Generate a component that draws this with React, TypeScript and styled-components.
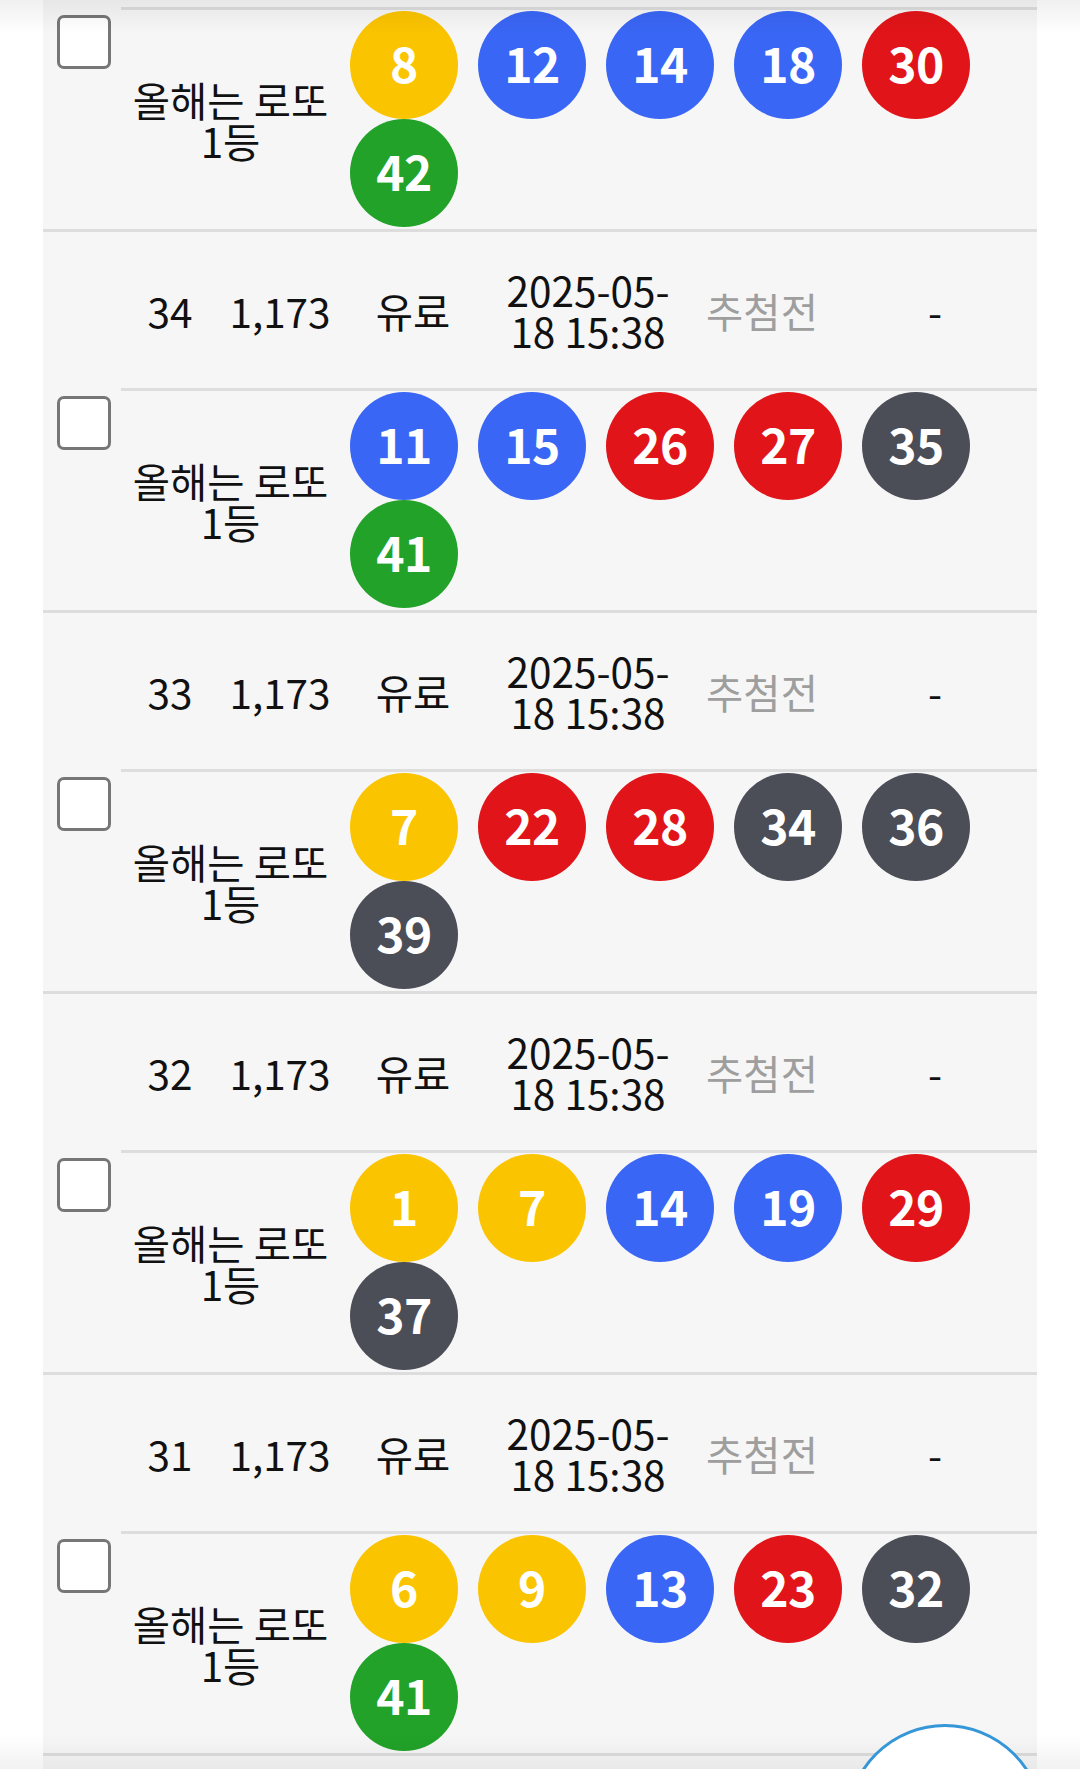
import React from "react";
import styled, { createGlobalStyle } from "styled-components";

const GlobalStyle = createGlobalStyle`
  html, body { margin: 0; padding: 0; background: #ffffff; }
  body {
    font-family: "Noto Sans CJK KR", "Noto Sans", sans-serif;
    color: #111111;
    overflow: hidden;
  }
  * { box-sizing: border-box; }
`;

const Page = styled.div`
  height: 1769px;
  overflow: hidden;
  padding: 0 43px;
  background: #ffffff;
`;

const Table = styled.div`
  background: #f6f6f6;
`;

const TopStub = styled.div`
  height: 7px;
`;

const Divider = styled.div`
  height: 3px;
  margin-left: 78px;
  background: #dddddd;
`;

const Separator = styled.div`
  height: 3px;
  background: #dddddd;
`;

const InfoRow = styled.div<{ $stub?: boolean }>`
  display: grid;
  grid-template-columns: 78px 98px 122px 144px 206px 142px 1fr;
  align-items: center;
  height: ${(p) => (p.$stub ? "40px" : "156px")};
  font-size: 40.5px;
  line-height: 41px;
`;

const Cell = styled.div<{ $muted?: boolean }>`
  text-align: center;
  color: ${(p) => (p.$muted ? "#9e9e9e" : "#111111")};
`;

const DateCell = styled(Cell)`
  padding: 0 12px;
`;

const BallRow = styled.div`
  display: grid;
  grid-template-columns: 78px 219px 1fr;
  height: 219px;
  padding: 1px 0 2px;
`;

const CheckCell = styled.div`
  padding: 4px 0 0 14px;
`;

const CheckBox = styled.span`
  display: block;
  width: 54px;
  height: 54px;
  border: 3px solid #767676;
  border-radius: 7px;
  background: #ffffff;
`;

const NameCell = styled.div`
  align-self: center;
  text-align: center;
  font-size: 40.5px;
  line-height: 41px;
  word-break: keep-all;
  color: #111111;
  padding-top: 2px;
`;

const Balls = styled.div`
  display: flex;
  flex-wrap: wrap;
  align-content: flex-start;
`;

const Ball = styled.span<{ $color: string }>`
  width: 108px;
  height: 108px;
  margin: 0 10px;
  padding-bottom: 6px;
  border-radius: 50%;
  background: ${(p) => p.$color};
  color: #ffffff;
  font-weight: 700;
  font-size: 48px;
  display: flex;
  align-items: center;
  justify-content: center;
  letter-spacing: -0.5px;
`;

const TopShade = styled.div`
  position: fixed;
  top: 0;
  left: 0;
  right: 0;
  height: 34px;
  background: linear-gradient(rgba(0, 0, 0, 0.06), rgba(0, 0, 0, 0));
  pointer-events: none;
`;

const BottomShade = styled.div`
  position: fixed;
  bottom: 0;
  left: 0;
  right: 0;
  height: 34px;
  background: linear-gradient(rgba(0, 0, 0, 0), rgba(0, 0, 0, 0.05));
  pointer-events: none;
`;

const FloatButton = styled.div`
  position: fixed;
  right: 36px;
  bottom: -153px;
  width: 198px;
  height: 198px;
  border-radius: 50%;
  background: #ffffff;
  border: 3px solid #3596d8;
`;

const ballColor = (n: number) => {
  if (n <= 10) return "#fbc400";
  if (n <= 20) return "#3a66f5";
  if (n <= 30) return "#e11519";
  if (n <= 40) return "#4b4d57";
  return "#22a229";
};

type Entry = { no: number; nums: number[] };

const entries: Entry[] = [
  { no: 34, nums: [11, 15, 26, 27, 35, 41] },
  { no: 33, nums: [7, 22, 28, 34, 36, 39] },
  { no: 32, nums: [1, 7, 14, 19, 29, 37] },
  { no: 31, nums: [6, 9, 13, 23, 32, 41] },
];

const NumberRow = ({ nums }: { nums: number[] }) => (
  <BallRow>
    <CheckCell>
      <CheckBox />
    </CheckCell>
    <NameCell>올해는 로또 1등</NameCell>
    <Balls>
      {nums.map((n, i) => (
        <Ball key={i} $color={ballColor(n)}>
          {n}
        </Ball>
      ))}
    </Balls>
  </BallRow>
);

const Info = ({ no }: { no: number }) => (
  <InfoRow>
    <Cell />
    <Cell>{no}</Cell>
    <Cell>1,173</Cell>
    <Cell>유료</Cell>
    <DateCell>
      2025-05-<wbr />18 15:38
    </DateCell>
    <Cell $muted>추첨전</Cell>
    <Cell>-</Cell>
  </InfoRow>
);

export default function App() {
  return (
    <>
      <GlobalStyle />
      <Page>
        <Table>
          <TopStub />
          <Divider />
          <NumberRow nums={[8, 12, 14, 18, 30, 42]} />
          <Separator />
          {entries.map((e) => (
            <React.Fragment key={e.no}>
              <Info no={e.no} />
              <Divider />
              <NumberRow nums={e.nums} />
              <Separator />
            </React.Fragment>
          ))}
          <InfoRow $stub />
        </Table>
      </Page>
      <TopShade />
      <BottomShade />
      <FloatButton />
    </>
  );
}
